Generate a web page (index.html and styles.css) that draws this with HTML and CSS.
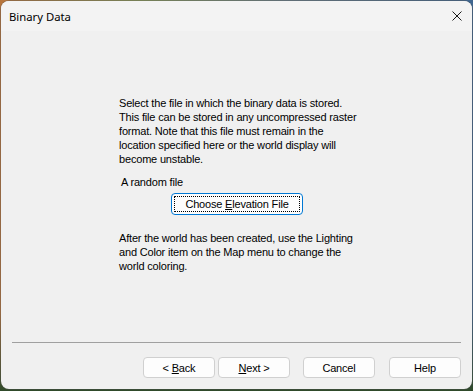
FILE: index.html
```html
<!DOCTYPE html>
<html lang="en">
<head>
  <meta charset="UTF-8">
  <title>Binary Data</title>
  <link rel="stylesheet" href="styles.css">
</head>
<body>

  <div class="window">
    <div class="titlebar">
      <span class="title">Binary Data</span>
      <span class="close">
        <svg width="10" height="10" viewBox="0 0 10 10">
          <path d="M0.5 0.5 L9.5 9.5 M9.5 0.5 L0.5 9.5" stroke="#1a1a1a" stroke-width="1" fill="none"/>
        </svg>
      </span>
    </div>

    <div class="content">
      <p class="text">Select the file in which the binary data is stored. This file can be stored in any uncompressed raster format. Note that this file must remain in the location specified here or the world display will become unstable.</p>

      <div class="file-label">A random file</div>
      <button class="btn btn-default"><span class="focus"><span>Choose <u>E</u>levation File</span></span></button>

      <p class="text after">After the world has been created, use the Lighting and Color item on the Map menu to change the world coloring.</p>
    </div>

    <div class="footer">
      <div class="separator"></div>
      <div class="buttons">
        <button class="btn"><span>&lt; <u>B</u>ack</span></button>
        <button class="btn next"><span><u>N</u>ext &gt;</span></button>
        <button class="btn cancel"><span>Cancel</span></button>
        <button class="btn help"><span>Help</span></button>
      </div>
    </div>
  </div>

</body>
</html>
```

FILE: styles.css
```css
* {
  box-sizing: border-box;
}

html, body {
  height: 100%;
}

body {
  margin: 0;
  padding: 1px 1px 0 1px;
  background:
    linear-gradient(180deg, rgba(0,0,0,0) 80%, #2f4a2a 100%),
    linear-gradient(90deg, #b8753c 0%, #8a9a5a 30%, #6a7f8a 60%, #3f6690 100%);
  font-family: "Liberation Sans", Arial, sans-serif;
  overflow: hidden;
}

.window {
  width: 471px;
  height: 388px;
  background: #f0f0f0;
  border-radius: 8px;
  box-shadow: 0 0 0 1px rgba(80, 80, 80, 0.35);
  display: flex;
  flex-direction: column;
  overflow: hidden;
}

.titlebar {
  height: 30px;
  background: #f3f3f3;
  display: flex;
  align-items: center;
  justify-content: space-between;
  padding: 0 10px 0 8px;
}

.title {
  font-family: "Noto Sans", "Open Sans", sans-serif;
  font-size: 11.3px;
  color: #000;
}

.close {
  display: flex;
  width: 10px;
  height: 10px;
}

.content {
  flex: 1;
  padding: 65px 0 0 118px;
  font-size: 11px;
  color: #000;
}

.text {
  margin: 0;
  width: 240px;
  line-height: 14px;
  letter-spacing: -0.18px;
}

.file-label {
  margin: 9px 0 0 2px;
  line-height: 14px;
  letter-spacing: -0.18px;
}

.after {
  margin-top: 16px;
}

.btn {
  font-family: "Liberation Sans", Arial, sans-serif;
  font-size: 11px;
  letter-spacing: -0.18px;
  color: #000;
  background: #fdfdfd;
  border: 1px solid #d0d0d0;
  border-radius: 4px;
  width: 72px;
  height: 21px;
  padding: 0;
  display: flex;
  align-items: center;
  justify-content: center;
}

.btn-default {
  margin: 4px 0 0 52px;
  width: 132px;
  height: 22px;
  border-color: #0078d4;
  padding: 2px;
}

.focus {
  flex: 1;
  align-self: stretch;
  display: flex;
  align-items: center;
  justify-content: center;
  border: 1px dotted #000;
  border-radius: 1px;
}

.footer {
  height: 47px;
  padding: 0 11px;
}

.separator {
  height: 1px;
  background: #a0a0a0;
}

.buttons {
  display: flex;
  justify-content: flex-end;
  margin-top: 14px;
}

.next {
  margin-left: 3px;
}

.cancel {
  margin-left: 13px;
}

.help {
  margin-left: 14px;
}
```
